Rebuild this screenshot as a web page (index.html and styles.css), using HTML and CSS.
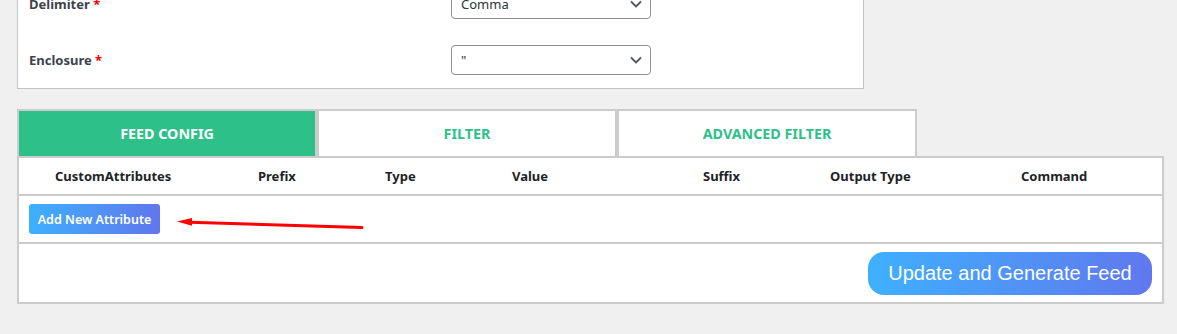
FILE: index.html
```html
<!DOCTYPE html>
<html lang="en">
<head>
    <meta charset="UTF-8">
    <meta name="viewport" content="width=device-width, initial-scale=1.0">
    <title>Feed Settings</title>
    <link rel="stylesheet" href="styles.css">
</head>
<body>
    <div class="wrap">
        <div class="settings">
            <div class="field-row">
                <label class="field-label">Delimiter <span class="req">*</span></label>
                <div class="select-box">
                    <span>Comma</span>
                    <svg width="12" height="8" viewBox="0 0 12 8"><path d="M1 1.5l5 5 5-5" fill="none" stroke="#50575e" stroke-width="1.8"/></svg>
                </div>
            </div>
            <div class="field-row">
                <label class="field-label">Enclosure <span class="req">*</span></label>
                <div class="select-box">
                    <span>"</span>
                    <svg width="12" height="8" viewBox="0 0 12 8"><path d="M1 1.5l5 5 5-5" fill="none" stroke="#50575e" stroke-width="1.8"/></svg>
                </div>
            </div>
        </div>

        <div class="tabs">
            <div class="tab active">FEED CONFIG</div>
            <div class="tab">FILTER</div>
            <div class="tab">ADVANCED FILTER</div>
        </div>

        <div class="config-table">
            <div class="head-row">
                <div>CustomAttributes</div>
                <div>Prefix</div>
                <div>Type</div>
                <div>Value</div>
                <div>Suffix</div>
                <div>Output Type</div>
                <div>Command</div>
            </div>
            <div class="add-row">
                <button type="button" class="add-btn">Add New Attribute</button>
                <svg class="pointer" width="200" height="18" viewBox="0 0 200 18">
                    <line x1="20" y1="8.2" x2="192" y2="13.6" stroke="#f00" stroke-width="3" stroke-linecap="round"/>
                    <polygon points="7,7.6 22,4 22,11.8" fill="#f00"/>
                </svg>
            </div>
            <div class="foot-row">
                <button type="button" class="update-btn">Update and Generate Feed</button>
            </div>
        </div>
    </div>
</body>
</html>
```

FILE: styles.css
```css
* {
    margin: 0;
    padding: 0;
    box-sizing: border-box;
}

body {
    font-family: 'Noto Sans', 'Open Sans', sans-serif;
    background: #f0f0f1;
    height: 334px;
    overflow: hidden;
}

.wrap {
    padding-left: 17px;
}

.settings {
    width: 847px;
    margin-top: -25px;
    background: #fff;
    border: 1px solid #c3c4c7;
    padding-left: 11px;
}

.field-row {
    display: flex;
    align-items: center;
    height: 56px;
}

.field-label {
    width: 422px;
    font-size: 13px;
    font-weight: 700;
    color: #3c434a;
}

.req {
    color: #e00;
}

.select-box {
    width: 200px;
    height: 30px;
    border: 1px solid #8c8f94;
    border-radius: 4px;
    display: flex;
    align-items: center;
    justify-content: space-between;
    padding: 0 8px 0 9px;
    font-size: 13px;
    color: #2c3338;
}

.tabs {
    display: flex;
    margin-top: 20px;
}

.tab {
    width: 300px;
    height: 47px;
    border: 2px solid #ccc;
    border-bottom: none;
    background: #fff;
    display: flex;
    align-items: center;
    justify-content: center;
    font-size: 14.3px;
    font-weight: 700;
    color: #2dc189;
}

.tab.active {
    background: #2dc189;
    color: #fff;
}

.config-table {
    width: 1147px;
    background: #fff;
    border: 2px solid #ccc;
}

.head-row {
    display: grid;
    grid-template-columns: 203px 127px 127px 191px 127px 191px 1fr;
    align-items: center;
    height: 38px;
    padding-left: 36px;
    border-bottom: 2px solid #ccc;
    font-size: 13px;
    font-weight: 700;
    color: #1d2327;
}

.add-row {
    position: relative;
    height: 48px;
    padding: 8px 10px;
    border-bottom: 2px solid #ccc;
}

.add-btn {
    width: 131px;
    height: 30px;
    border: none;
    border-radius: 3px;
    background: linear-gradient(to right, #3eb0fd, #6176ed);
    color: #fff;
    font-family: inherit;
    font-size: 12.5px;
    font-weight: 600;
    cursor: pointer;
}

.pointer {
    position: absolute;
    left: 151px;
    top: 18px;
}

.foot-row {
    height: 58px;
    padding: 8px 10px 0;
    display: flex;
    justify-content: flex-end;
    align-items: flex-start;
}

.update-btn {
    width: 284px;
    height: 43px;
    border: none;
    border-radius: 16px;
    background: linear-gradient(to right, #3fb0fe, #6078ee);
    color: #fff;
    font-family: 'Liberation Sans', Arial, sans-serif;
    font-size: 20px;
    cursor: pointer;
}
```
